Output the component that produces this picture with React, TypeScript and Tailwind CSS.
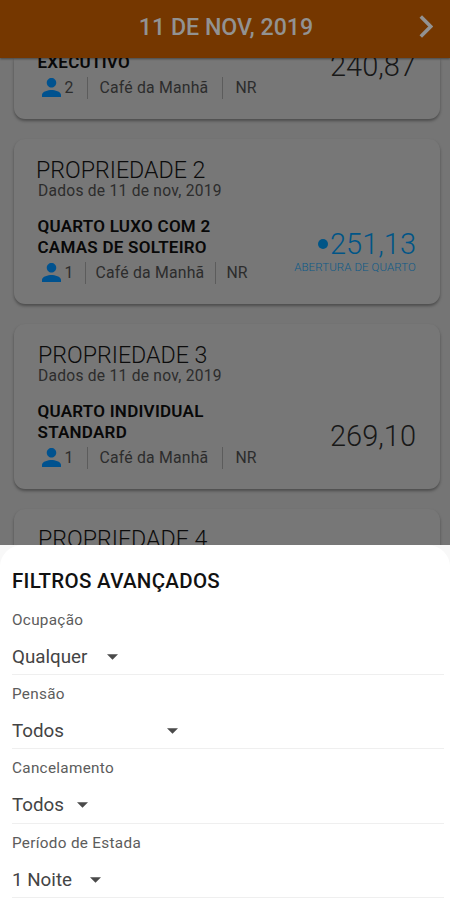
import clsx from 'clsx';

interface Room {
  name: string[];
  guests: number;
  price: string;
  opening?: boolean;
}

interface PropertyCardProps {
  title?: string;
  titleClass?: string;
  date?: string;
  room?: Room;
  className?: string;
}

const PersonIcon = () => (
  <svg viewBox="4 4 16 16" className="mb-px ml-1 h-[19px] w-[19px] fill-[#00528f]">
    <path d="M12 12c2.21 0 4-1.79 4-4s-1.79-4-4-4-4 1.79-4 4 1.79 4 4 4zm0 2c-2.67 0-8 1.34-8 4v2h16v-2c0-2.66-5.33-4-8-4z" />
  </svg>
);

const Meta = ({ guests, narrow }: { guests: number; narrow?: boolean }) => (
  <div className="mt-[3px] flex h-6 items-center text-[15.8px] leading-6 font-normal text-[#2c2c2c]">
    <PersonIcon />
    <span className={clsx('ml-1', narrow ? 'w-[20px]' : 'w-[22px]')}>{guests}</span>
    <span className="h-[22px] w-px bg-[#5c5c5c]" />
    <span className={clsx('w-[110px] tracking-[0.2px] whitespace-nowrap', narrow ? 'ml-[10px]' : 'ml-3')}>
      Café da Manhã
    </span>
    <span className={clsx('h-[22px] w-px bg-[#5c5c5c]', narrow ? 'ml-[9px]' : 'ml-3')} />
    <span className={narrow ? 'ml-[11px]' : 'ml-[13px]'}>NR</span>
  </div>
);

const Price = ({ price, opening }: { price: string; opening?: boolean }) => (
  <div
    className={clsx(
      'flex flex-col items-end text-[29px] leading-8 font-light whitespace-nowrap',
      opening ? 'mb-[30px] text-[#005587]' : 'mb-[37px] text-[#181818]',
    )}
  >
    <div className="flex items-center">
      {opening && <span className="mr-[2px] h-[10px] w-[10px] rounded-full bg-[#005587]" />}
      <span>{price}</span>
    </div>
    {opening && (
      <span className="text-[11.5px] leading-[14px] font-light tracking-[0.1px] text-[#0d5a88]">ABERTURA DE QUARTO</span>
    )}
  </div>
);

const PropertyCard = ({ title, titleClass, date, room, className }: PropertyCardProps) => (
  <section
    className={clsx(
      'flex shrink-0 flex-col rounded-[11px] bg-[#777] pr-6 pl-6 whitespace-nowrap shadow-[0_2px_3px_rgba(0,0,0,0.35)]',
      title ? 'pt-[19px]' : 'justify-end rounded-t-none',
      className,
    )}
  >
    {title && <h2 className={clsx('text-[23.2px] leading-6 font-light text-[#0c0c0c]', titleClass)}>{title}</h2>}
    {date && <p className="text-[15.6px] leading-[18px] font-normal tracking-[0.25px] text-[#2c2c2c]">{date}</p>}
    {room && (
      <div className={clsx('-ml-[0.5px] flex items-end justify-between', title && 'mt-auto')}>
        <div className="pb-[19px]">
          <div className="text-[17px] leading-[21px] font-semibold tracking-[0.25px] text-[#080808]">
            {room.name.map((line) => (
              <p key={line}>{line}</p>
            ))}
          </div>
          <Meta guests={room.guests} narrow={room.opening} />
        </div>
        <Price price={room.price} opening={room.opening} />
      </div>
    )}
  </section>
);

const FilterField = ({ label, value, width }: { label: string; value: string; width: string }) => (
  <div className="mr-[6px] ml-3 h-[74.2px] border-b-[1.5px] border-[#efefef]">
    <p className="pt-2 text-[15.3px] leading-[22px] font-normal tracking-[0.3px] text-[#5c5c5c]">{label}</p>
    <button type="button" className={clsx('mt-[14px] flex items-center justify-between', width)}>
      <span className="text-[18.8px] leading-6 font-normal text-[#444]">{value}</span>
      <svg viewBox="0 0 10 5" className="h-[6px] w-[11px] fill-[#4a4a4a]">
        <path d="M0 0h10L5 5z" />
      </svg>
    </button>
  </div>
);

const App = () => {
  return (
    <div className="flex h-[900px] w-[450px] flex-col overflow-hidden bg-[#757575] font-[Roboto,sans-serif]">
      <header className="z-10 grid h-[58px] shrink-0 grid-cols-[42px_1fr_40px] items-center bg-[#753700] pb-1 shadow-[0_1px_2px_rgba(0,0,0,0.4)]">
        <h1 className="col-start-2 pt-px text-center text-[23.2px] font-medium whitespace-nowrap text-[#929292]">
          11 DE NOV, 2019
        </h1>
        <svg viewBox="0 0 13 22" className="mb-px ml-[9px] h-[23px] w-[14px] fill-none stroke-[#929292] stroke-[3.4]">
          <path d="M1.5 1.5 11 11l-9.5 9.5" />
        </svg>
      </header>

      <main className="flex h-[487px] shrink-0 flex-col gap-5 overflow-hidden pr-[10px] pl-[14px]">
        <PropertyCard className="h-[61px]" room={{ name: ['EXECUTIVO'], guests: 2, price: '240,87' }} />
        <PropertyCard
          className="h-[165px]"
          title="PROPRIEDADE 2"
          titleClass="-ml-[2px]"
          date="Dados de 11 de nov, 2019"
          room={{ name: ['QUARTO LUXO COM 2', 'CAMAS DE SOLTEIRO'], guests: 1, price: '251,13', opening: true }}
        />
        <PropertyCard
          className="h-[165px]"
          title="PROPRIEDADE 3"
          date="Dados de 11 de nov, 2019"
          room={{ name: ['QUARTO INDIVIDUAL', 'STANDARD'], guests: 1, price: '269,10' }}
        />
        <PropertyCard className="h-[165px]" title="PROPRIEDADE 4" titleClass="-mt-px" />
      </main>

      <div className="flex-1 bg-[#f8f8f8]">
        <div className="h-full rounded-t-[22px] bg-white pt-[22px]">
          <h2 className="mb-[6px] ml-3 text-[20.5px] leading-7 font-medium tracking-[0.3px] text-[#111]">
            FILTROS AVANÇADOS
          </h2>
          <FilterField label="Ocupação" value="Qualquer" width="w-[106px]" />
          <FilterField label="Pensão" value="Todos" width="w-[166px]" />
          <FilterField label="Cancelamento" value="Todos" width="w-[76px]" />
          <FilterField label="Período de Estada" value="1 Noite" width="w-[89px]" />
        </div>
      </div>
    </div>
  );
};

export default App;
